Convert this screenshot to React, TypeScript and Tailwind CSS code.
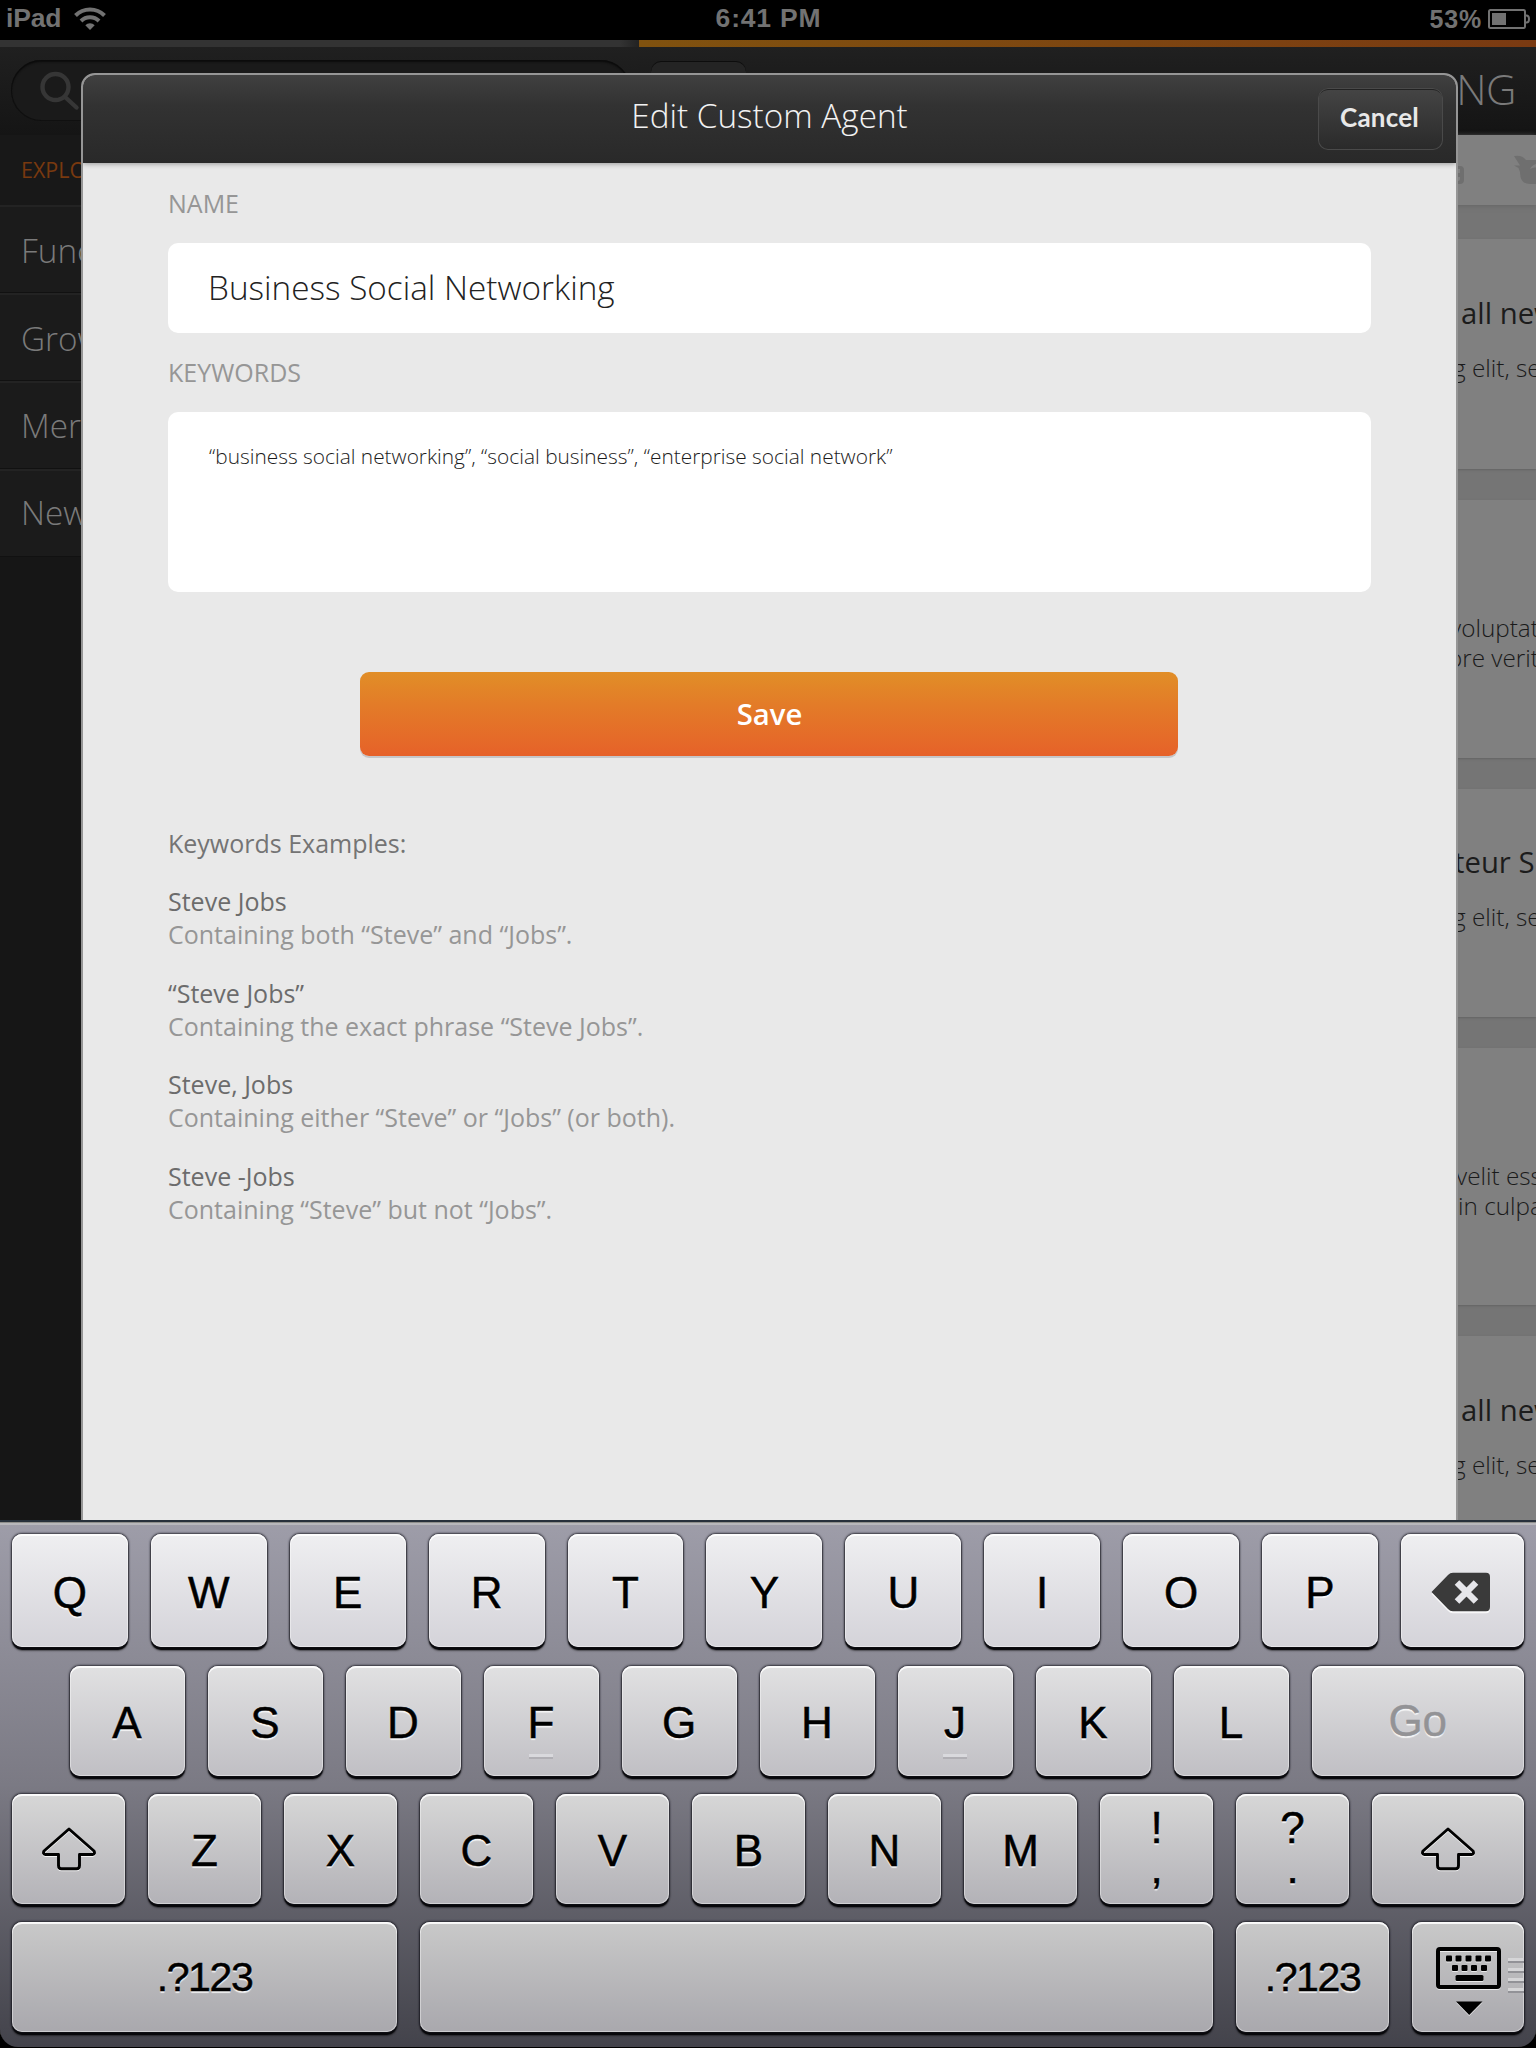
import type { ReactNode } from "react";

const SANS = "font-['Open_Sans',sans-serif]";
const KEYFONT = "font-['Liberation_Sans',Arial,sans-serif]";

/* ---------- Status bar ---------- */

function StatusBar() {
  return (
    <div className={`${KEYFONT} grid h-10 grid-cols-3 items-start bg-black pr-[5px] pl-[6px] text-[26.5px] leading-[36px] font-bold text-[#727272]`}>
      <div className="flex items-center gap-[13px]">
        <span className="tracking-[-0.2px]">iPad</span>
        <svg width="32" height="24" viewBox="0 0 32 24" className="mt-0.5" fill="none" stroke="#727272">
          <path d="M1.5 8.5 A20.5 20.5 0 0 1 30.5 8.5" strokeWidth="4" />
          <path d="M7 14 A12.7 12.7 0 0 1 25 14" strokeWidth="4" />
          <path d="M16 23 L11.3 18.3 A6.6 6.6 0 0 1 20.7 18.3 Z" fill="#727272" stroke="none" />
        </svg>
      </div>
      <div className="text-center tracking-[0.8px]">6:41 PM</div>
      <div className="flex items-center justify-end gap-[6px]">
        <span className="text-[25px] leading-[38px] tracking-[0.8px]">53%</span>
        <svg width="43" height="20" viewBox="0 0 43 20" className="-mt-px" fill="none" stroke="#727272">
          <rect x="1" y="1" width="36" height="18" rx="1.5" strokeWidth="2" />
          <rect x="4" y="4" width="14" height="12" fill="#727272" stroke="none" />
          <path d="M37 6.5 h1.5 a2.5 3.5 0 0 1 0 7 h-1.5" strokeWidth="2" />
        </svg>
      </div>
    </div>
  );
}

/* ---------- Dimmed background ---------- */

const menu = [
  { label: "Function", leading: "leading-[87px]" },
  { label: "Growth", leading: "leading-[86px]" },
  { label: "Mergers", leading: "leading-[85px]" },
  { label: "New", leading: "leading-[83px]" },
];

function Sidebar() {
  return (
    <aside className="flex w-[639px] flex-col bg-[#161616]">
      <div className="h-[7px] bg-gradient-to-r from-[#333] from-97% to-[#222]" />
      <div className="h-[88px] bg-gradient-to-b from-[#202020] to-[#151515] pt-[13px] pl-[11px]">
        <div className="h-[61px] w-[620px] rounded-full bg-[#1a1a1a] pt-[11px] pl-[28px] shadow-[inset_0_2px_2px_#0c0c0c,inset_0_0_0_1px_#101010]">
          <svg width="42" height="42" viewBox="0 0 42 42" fill="none" stroke="#363636" strokeWidth="4.4">
            <circle cx="16.5" cy="16" r="13" />
            <path d="M26 26 L37.5 36.5" strokeLinecap="round" />
          </svg>
        </div>
      </div>
      <div className="h-[70px] bg-[#181818] pl-[21px] text-[21.5px] leading-[70px] text-[#78390f]">EXPLORE</div>
      {menu.map(({ label, leading }) => (
        <div
          key={label}
          className={`${leading} h-[88px] border-t-2 border-b border-t-[#232323] border-b-[#111] bg-[#1b1b1b] pl-[21px] text-[33.3px] font-light text-[#7a7a7a]`}
        >
          {label}
        </div>
      ))}
    </aside>
  );
}

type Card = { height: string; title?: string; titlePad?: string; lines: { text: string; pad: string }[] };

const cards: Card[] = [
  { height: "h-[230px] pt-[54px]", title: "all new", titlePad: "pl-[822px]", lines: [{ text: "g elit, sed", pad: "pl-[814px]" }] },
  {
    height: "h-[258px] pt-[53px]",
    lines: [
      { text: "voluptatem", pad: "pl-[811px]" },
      { text: "ore veritatis", pad: "pl-[809px]" },
    ],
  },
  { height: "h-[228px] pt-[53px]", title: "teur Sint", titlePad: "pl-[815px]", lines: [{ text: "g elit, sed", pad: "pl-[814px]" }] },
  {
    height: "h-[257px] pt-[53px]",
    lines: [
      { text: "velit esse", pad: "pl-[817px]" },
      { text: "in culpa", pad: "pl-[819px]" },
    ],
  },
  { height: "h-[257px] pt-[54px]", title: "all new", titlePad: "pl-[822px]", lines: [{ text: "g elit, sed", pad: "pl-[814px]" }] },
];

function Feed() {
  return (
    <main className="flex w-[897px] flex-col overflow-hidden bg-[#757575]">
      <div className="h-[7px] shrink-0 bg-gradient-to-r from-[#80520f] to-[#7a3a12]" />
      <div className="flex h-[88px] shrink-0 items-start justify-between bg-gradient-to-b from-[#202020] to-[#141414] pr-[20px] pl-3">
        <div className="mt-[14px] h-[60px] w-[95px] rounded-[10px] bg-[#242424] shadow-[inset_0_1px_0_#0d0d0d]" />
        <div className="text-[42px] leading-[84px] font-light tracking-[-0.5px] text-[#7a7a7a]">NG</div>
      </div>
      <div className="flex h-[70px] shrink-0 items-start justify-end bg-[#808080] pt-[20px] shadow-[0_1px_5px_#656565]">
        <svg width="80" height="32" viewBox="0 0 80 32" fill="#6f6f6f">
          <path d="M0 11 h4 q4 0 4 4 v10 q0 4 -4 4 h-4 v-3 h2 q2 0 2 -2 v-2 h-3 v-4 h3 v-4 h-4z" />
          <path d="M58 1 q8 -1.500 12 4 h10 v4 q-4 1 -6 5 q3 -2 6 -1.500 v16.500 h-6 q-8 0 -9.500 -7 q-0.300 -6 -2 -9 l-4.500 -2.500 h6 z" />
        </svg>
      </div>
      <div className="mt-[34px] flex flex-col gap-[31px]">
        {cards.map((card, i) => (
          <section key={i} className={`${card.height} shrink-0 bg-[#808080] whitespace-nowrap shadow-[0_1px_2px_#636363]`}>
            <div className={`${card.titlePad ?? ""} mb-[20px] h-10 text-[29.3px] leading-10 text-[#1c1c1c]`}>{card.title}</div>
            {card.lines.map((l) => (
              <div key={l.text} className={`${l.pad} text-[24.3px] leading-[30px] font-light text-[#1a1a1a]`}>
                {l.text}
              </div>
            ))}
          </section>
        ))}
      </div>
    </main>
  );
}

/* ---------- Modal ---------- */

const examples = [
  ["Steve Jobs", "Containing both “Steve” and “Jobs”."],
  ["“Steve Jobs”", "Containing the exact phrase “Steve Jobs”."],
  ["Steve, Jobs", "Containing either “Steve” or “Jobs” (or both)."],
  ["Steve -Jobs", "Containing “Steve” but not “Jobs”."],
];

function Modal() {
  return (
    <div className="absolute top-[33px] left-[81px] flex h-[1500px] w-[1377px] flex-col overflow-hidden rounded-[14px] border-2 border-[#969696] bg-[#e9e9e9]">
      <header className="relative flex h-[88px] shrink-0 items-start justify-center bg-gradient-to-b from-[#404040] via-[#323232] via-35% to-[#292929] shadow-[0_1px_5px_#999]">
        <h1 className="mt-[12px] text-[33.3px] leading-[56px] font-light text-[#f2f2f2]">Edit Custom Agent</h1>
        <button className="absolute top-[13px] right-[13px] h-[62px] w-[125px] rounded-[10px] bg-gradient-to-b from-[#454545] to-[#2a2a2a] pr-[2px] pb-[3px] font-['Lato',sans-serif] text-[26px] font-bold tracking-[0.2px] text-[#e8e8e8] shadow-[inset_0_0_0_1px_#4a4a4a,inset_0_2px_0_#222]">
          Cancel
        </button>
      </header>
      <div className="flex flex-col px-[85px]">
        <label className="mt-[23px] text-[25px] leading-[34px] text-[#969696]">NAME</label>
        <div className="mt-[23px] h-[90px] rounded-[10px] bg-white pl-[40px] text-[33.3px] leading-[88px] font-light text-[#222]">
          Business Social Networking
        </div>
        <label className="mt-[22px] text-[25px] leading-[34px] text-[#969696]">KEYWORDS</label>
        <div className="mt-[23px] h-[180px] rounded-[10px] bg-white pt-[27px] pl-[41px] text-[20.87px] leading-[34px] font-light text-[#1c1c1c]">
          “business social networking”, “social business”, “enterprise social network”
        </div>
        <button className="mt-[80px] mr-[2px] h-[84px] w-[818px] self-center rounded-[9px] bg-gradient-to-b from-[#e18e27] via-[#e37b28] via-40% to-[#e66129] pt-[2px] pl-[2px] text-[29.3px] font-semibold text-white shadow-[0_2px_0_#c6c6c8]">
          Save
        </button>
        <p className="mt-[70px] text-[25px] leading-[34px] text-[#747474]">Keywords Examples:</p>
        <dl className="mt-[24px] flex flex-col gap-[24.700px] text-[25px]">
          {examples.map(([term, text]) => (
            <div key={term}>
              <dt className="leading-[34px] text-[#6c6c6c]">{term}</dt>
              <dd className="leading-[33px] text-[#969696]">{text}</dd>
            </div>
          ))}
        </dl>
      </div>
    </div>
  );
}

/* ---------- Keyboard ---------- */

const tones = [
  "from-[#efeff1] to-[#d4d3d9]",
  "from-[#e1e1e2] to-[#c0bfc4]",
  "from-[#d7d7d7] to-[#b3b2b7]",
  "from-[#c9c9c9] to-[#a9a8ad]",
];

function Key({ row, width, children, className = "" }: { row: number; width: string; children?: ReactNode; className?: string }) {
  return (
    <div
      className={`${tones[row]} ${width} ${className} relative flex h-full shrink-0 items-center justify-center rounded-[10px] bg-gradient-to-b text-[44px] leading-none text-black shadow-[inset_0_2px_0_rgba(255,255,255,0.85),inset_0_0_0_1px_rgba(255,255,255,0.4),0_0_2px_1px_rgba(20,20,28,0.75),0_3px_1px_#050507,0_4px_2px_rgba(0,0,0,0.4)] [-webkit-text-stroke:0.5px] [text-shadow:0_2px_1px_rgba(255,255,255,0.8)]`}
    >
      {children}
    </div>
  );
}

function Shift() {
  return (
    <svg width="56" height="46" viewBox="0 0 56 46" className="mt-[2px] drop-shadow-[0_1.5px_0_rgba(255,255,255,0.8)]" fill="none" stroke="#000" strokeWidth="2.900" strokeLinejoin="round">
      <path d="M28 2 L53 24 Q54.500 27 51.500 27.500 H38.500 V38.500 Q38.500 41.800 35.500 41.800 H20.500 Q17.500 41.800 17.500 38.500 V27.500 H4.500 Q1.500 27 3 24 Z" />
    </svg>
  );
}

function Backspace() {
  return (
    <svg width="60" height="40" viewBox="0 0 60 40" className="mt-[2px] mr-[2px] drop-shadow-[0_2px_0_rgba(255,255,255,0.8)]">
      <path d="M0.500 20 L17 3 Q19 0.800 22 0.800 H55 Q59 0.800 59 5 V35 Q59 39.200 55 39.200 H22 Q19 39.200 17 37 Z" fill="#3a3a3a" />
      <path d="M26 10.500 L45 29.500 M45 10.500 L26 29.500" stroke="#e6e6ea" strokeWidth="6.500" />
    </svg>
  );
}

function HideKeyboard() {
  const top = [10, 19.5, 29.5, 39.5, 49];
  const mid = [16, 25.5, 35, 45];
  return (
    <svg width="65" height="70" viewBox="0 0 65 70" className="mt-[10px] drop-shadow-[0_1.5px_0_rgba(255,255,255,0.7)]">
      <rect x="2" y="2" width="61" height="38" rx="2" fill="none" stroke="#000" strokeWidth="4" />
      {top.map((x) => (
        <rect key={x} x={x} y="8.500" width="6" height="6" rx="1" />
      ))}
      {mid.map((x) => (
        <rect key={x} x={x} y="18" width="6" height="6" rx="1" />
      ))}
      <rect x="19.500" y="28" width="28" height="6" rx="1.500" />
      <path d="M20 54.500 H46.500 L33.200 68 Z" />
    </svg>
  );
}

const Bump = () => <span className="absolute bottom-[17px] left-[45px] h-[5px] w-[24px] border-b-2 border-[#b0afb4] bg-[#d9d9dd]" />;

function Keyboard() {
  return (
    <div className="h-[528px] bg-black">
      <div
        className={`${KEYFONT} flex h-[527px] flex-col rounded-b-[18px] border-t-2 border-[#27303b] bg-gradient-to-b from-[#9e9da9] via-[#7b7a84] via-50% to-[#43434b] pr-[11px] pl-[12px] shadow-[inset_0_1px_0_#8f8f8c,inset_0_3px_0_#b7b7bb]`}
      >
        <div className="mt-[12px] flex h-[113px] gap-[23px]">
          {[..."QWERTYUIOP"].map((c) => (
            <Key key={c} row={0} width="w-[115.9px]" className="pt-[5px]">
              {c}
            </Key>
          ))}
          <Key row={0} width="w-[123px]">
            <Backspace />
          </Key>
        </div>
        <div className="mt-[19px] flex h-[110px] gap-[23px] pl-[57.5px]">
          {[..."ASDFGHJKL"].map((c) => (
            <Key key={c} row={1} width="w-[115px]" className="pt-[4px]">
              {c}
              {(c === "F" || c === "J") && <Bump />}
            </Key>
          ))}
          <Key row={1} width="w-[212.5px]">
            <span className="text-[#939396]">Go</span>
          </Key>
        </div>
        <div className="mt-[18px] flex h-[110px] gap-[23px]">
          <Key row={2} width="w-[113px]">
            <Shift />
          </Key>
          {[..."ZXCVBNM"].map((c) => (
            <Key key={c} row={2} width="w-[113px]" className="pt-[4px]">
              {c}
            </Key>
          ))}
          <Key row={2} width="w-[113px]" className="flex-col pb-[4px]">
            <span className="h-[38px] leading-[38px]">!</span>
            <span className="h-[38px] leading-[42px]">,</span>
          </Key>
          <Key row={2} width="w-[113px]" className="flex-col pb-[4px]">
            <span className="h-[38px] leading-[38px]">?</span>
            <span className="h-[38px] leading-[42px]">.</span>
          </Key>
          <Key row={2} width="w-[152px]">
            <Shift />
          </Key>
        </div>
        <div className="mt-[18px] flex h-[110px] gap-[23px]">
          <Key row={3} width="w-[385px]">
            <span className="text-[41px] tracking-[-1.4px]">.?123</span>
          </Key>
          <Key row={3} width="w-[793px]" />
          <Key row={3} width="w-[153px]">
            <span className="text-[41px] tracking-[-1.4px]">.?123</span>
          </Key>
          <Key row={3} width="w-[112px]">
            <HideKeyboard />
            <span className="absolute top-[36px] right-0 flex w-[16px] flex-col gap-[5px]">
              {[0, 1, 2, 3].map((i) => (
                <span key={i} className="h-[5px] border-b-2 border-[#929297] bg-[#d5d5d7]" />
              ))}
            </span>
          </Key>
        </div>
      </div>
    </div>
  );
}

export default function App() {
  return (
    <div className={`${SANS} flex h-[2048px] w-[1536px] flex-col overflow-hidden bg-black`}>
      <StatusBar />
      <div className="relative flex h-[1480px] overflow-hidden">
        <Sidebar />
        <Feed />
        <Modal />
      </div>
      <Keyboard />
    </div>
  );
}
